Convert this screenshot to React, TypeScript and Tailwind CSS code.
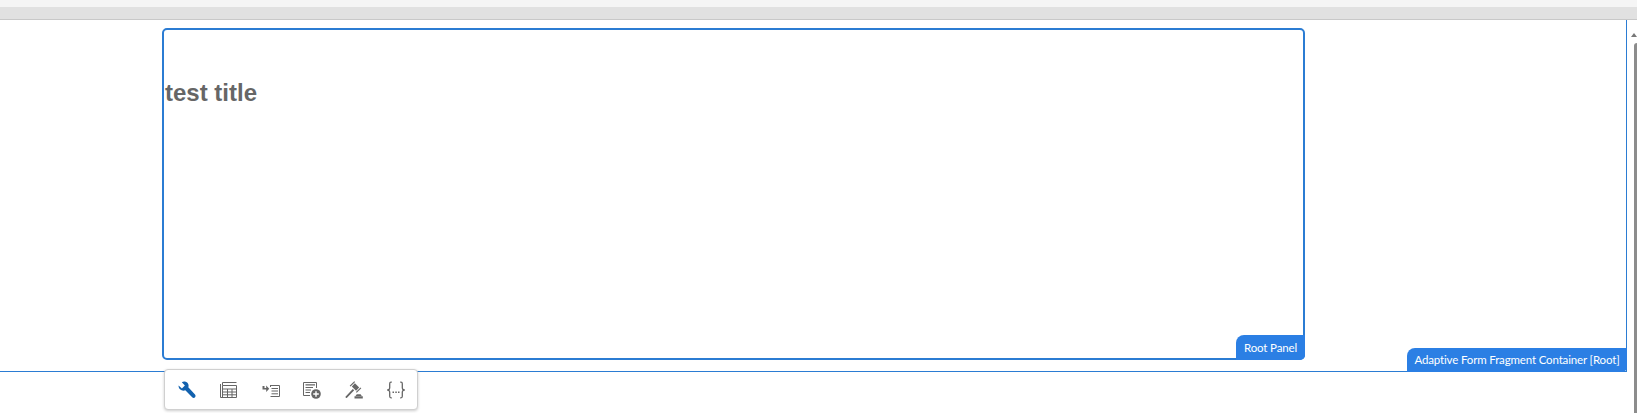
const label = "font-['Lato','Liberation_Sans',sans-serif] text-[11.5px] tracking-[-0.15px] leading-none text-white bg-[#2b7fe4] flex items-center justify-center whitespace-nowrap";

function WrenchIcon() {
  return (
    <svg width="18" height="18" viewBox="0 0 18 18">
      <path
        fill="#1261ae"
        d="M.6 4.400 3.900 7.500 6.900 4.600 3.800 1.200C5.600 0 8.200.4 9.600 2c1 1.200 1.300 2.900.7 4.300l6.700 7.300c.8.900.7 2.200-.1 2.900-.9.700-2 .6-2.700-.2L7.300 9.300C5.500 10 3.400 9.600 2 8.200 1 7.200.4 5.700.6 4.400Z"
      />
    </svg>
  );
}

function TableIcon() {
  return (
    <svg width="18" height="18" viewBox="0 0 18 18" fill="none" stroke="#666666" strokeWidth="1">
      <path d="M.5 3V16.500H16.500V4.500H2.500V1.500H16.500" />
      <path d="M2.500 8H16.500M2.500 11H16.500M2.500 13.800H16.500M2.500 4.500V16.500M7.500 8V16.500M12 8V16.500" />
    </svg>
  );
}

function MoveInIcon() {
  return (
    <svg width="18" height="18" viewBox="0 0 18 18" fill="none">
      <path fill="#666666" d="M0.500 5H2.500V7H4.200V4.500L7.200 7.700 4.200 11V8.500H0.500Z" />
      <path stroke="#666666" strokeWidth="1" d="M8 4.500H17.500M8.500 15.500H17.500V4.500M8.500 4.500V6M9.500 7.500H16M9.500 10H16M9.500 12.800H16" />
    </svg>
  );
}

function AddFormIcon() {
  return (
    <svg width="18" height="18" viewBox="0 0 18 18" fill="none">
      <path stroke="#666666" strokeWidth="1" d="M7 14.500H.500V1.500H13.500V7" />
      <path fill="#666666" d="M2.500 3.200H12V4.500H2.500ZM2.500 6H10V7H2.500ZM2.500 8.500H8V9.500H2.500ZM2.500 11H7V12H2.500Z" />
      <circle cx="13" cy="13" r="4.800" fill="#666666" />
      <path stroke="#fff" strokeWidth="1.400" d="M13 10.200V15.800M10.200 13H15.800" />
    </svg>
  );
}

function GavelIcon() {
  return (
    <svg width="18" height="18" viewBox="0 0 18 18" fill="#666666">
      {/* hammer head and handle, tilted 45deg */}
      <g transform="rotate(45 10.500 6)">
        <rect x="7.500" y="3.800" width="6" height="4.400" />
        <rect x="5.500" y="2.800" width="1.200" height="6.400" />
        <rect x="14.300" y="2.800" width="1.200" height="6.400" />
      </g>
      <path d="M7.800 7.900 9.200 9.300 2 16.700C1.100 17.600-.2 16.300.700 15.400Z" />
      <path d="M9.500 15.200h8.300V17.500H9.500ZM11.800 13.300h3.800L16.800 15H10.500Z" />
    </svg>
  );
}

function BracesIcon() {
  return (
    <svg width="18" height="18" viewBox="0 0 18 18" fill="none">
      <path
        stroke="#666666"
        strokeWidth="1.300"
        d="M4.800 1.200H4C3 1.200 2.700 1.800 2.700 2.700V7C2.700 8 2.100 8.700 1 9 2.100 9.300 2.700 10 2.700 11V15.300C2.700 16.200 3 16.800 4 16.800H4.800M13.200 1.200H14C15 1.200 15.300 1.800 15.300 2.700V7C15.300 8 15.900 8.700 17 9 15.900 9.300 15.300 10 15.300 11V15.300C15.300 16.200 15 16.800 14 16.800H13.200"
      />
      <path fill="#666666" d="M5.500 10.500h1.500v1.500H5.500ZM8.300 10.500h1.500v1.500H8.300ZM11 10.500h1.500v1.500H11Z" />
    </svg>
  );
}

const tools = [WrenchIcon, TableIcon, MoveInIcon, AddFormIcon, GavelIcon, BracesIcon];

export default function App() {
  return (
    <div className="relative flex h-[413px] w-[1637px] flex-col overflow-hidden bg-white">
      {/* browser chrome strip */}
      <div className="h-[7px] bg-[#f5f5f5]" />
      <div className="h-[13px] border-b border-[#c8c8c8] bg-[#e1e1e1]" />

      <div className="flex flex-1 items-start">
        {/* root container */}
        <div className="relative h-[352px] w-[1627px] border-r-[1.5px] border-b border-[#2b7cd3] pt-[8px] pl-[162px]">
          <div className="relative h-[332px] w-[1143px] rounded-[5px] border-2 border-[#2b7cd3]">
            <h1 className="mt-[47px] ml-[1px] font-['Liberation_Sans',sans-serif] text-[24px] leading-[32px] font-bold text-[#666666]">
              test title
            </h1>
            <div className={`absolute -right-[2px] -bottom-[2px] h-[25px] w-[69px] rounded-tl-[8px] rounded-br-[5px] ${label}`}>
              Root Panel
            </div>
          </div>
          <div className={`absolute -right-[1px] -bottom-[1px] h-[24px] w-[220px] rounded-tl-[8px] rounded-br-[5px] ${label}`}>
            Adaptive Form Fragment Container [Root]
          </div>
        </div>

        {/* scrollbar */}
        <div className="ml-auto flex h-full w-[3px] flex-col items-end pt-[13px]">
          <div className="h-0 w-0 border-x-[3px] border-b-[4px] border-x-transparent border-b-[#777777]" />
          <div className="mt-[6px] w-[3px] flex-1 rounded-tl-[3px] bg-[#8c8c8c]" />
        </div>
      </div>

      {/* floating toolbar */}
      <div className="absolute top-[369px] left-[164px] flex h-[41px] w-[254px] items-center justify-between rounded-[4px] border border-[#d0d0d0] bg-white pr-[12px] pl-[13px] shadow-[0_1px_3px_rgba(0,0,0,0.2)]">
        {tools.map((Icon, i) => (
          <span key={i} className="flex h-[18px] w-[18px] items-center justify-center">
            <Icon />
          </span>
        ))}
      </div>
    </div>
  );
}
